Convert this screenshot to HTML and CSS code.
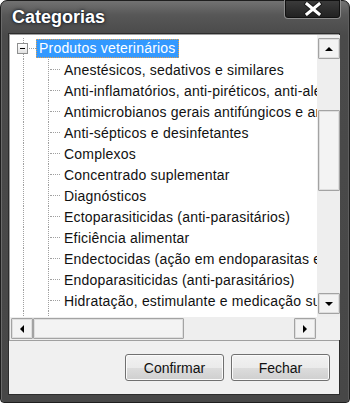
FILE: index.html
```html
<!DOCTYPE html>
<html lang="pt">
<head>
    <meta charset="UTF-8">
    <title>Categorias</title>
    <link rel="stylesheet" href="styles.css">
</head>
<body>
    <div class="window">
        <div class="titlebar">
            <span class="title">Categorias</span>
            <button class="close-btn">
                <svg width="18" height="14" viewBox="0 0 18 14">
                    <path d="M3 2 L15 12 M15 2 L3 12" stroke="#1a1a1a" stroke-width="5" stroke-linecap="square"/>
                    <path d="M3 2 L15 12 M15 2 L3 12" stroke="#fff" stroke-width="3" stroke-linecap="square"/>
                </svg>
            </button>
        </div>

        <div class="client">
            <div class="tree">
                <div class="tree-view">
                    <div class="row root">
                        <span class="exp-cell"><span class="expander"></span></span>
                        <span class="root-link"></span>
                        <span class="label selected">Produtos veterinários</span>
                    </div>
                    <div class="row"><span class="gap"></span><span class="vline"></span><span class="branch"></span><span class="label">Anestésicos, sedativos e similares</span></div>
                    <div class="row"><span class="gap"></span><span class="vline"></span><span class="branch"></span><span class="label">Anti-inflamatórios, anti-piréticos, anti-alérgicos</span></div>
                    <div class="row"><span class="gap"></span><span class="vline"></span><span class="branch"></span><span class="label">Antimicrobianos gerais antifúngicos e antivirais</span></div>
                    <div class="row"><span class="gap"></span><span class="vline"></span><span class="branch"></span><span class="label">Anti-sépticos e desinfetantes</span></div>
                    <div class="row"><span class="gap"></span><span class="vline"></span><span class="branch"></span><span class="label">Complexos</span></div>
                    <div class="row"><span class="gap"></span><span class="vline"></span><span class="branch"></span><span class="label">Concentrado suplementar</span></div>
                    <div class="row"><span class="gap"></span><span class="vline"></span><span class="branch"></span><span class="label">Diagnósticos</span></div>
                    <div class="row"><span class="gap"></span><span class="vline"></span><span class="branch"></span><span class="label">Ectoparasiticidas (anti-parasitários)</span></div>
                    <div class="row"><span class="gap"></span><span class="vline"></span><span class="branch"></span><span class="label">Eficiência alimentar</span></div>
                    <div class="row"><span class="gap"></span><span class="vline"></span><span class="branch"></span><span class="label">Endectocidas (ação em endoparasitas e ectoparasitas)</span></div>
                    <div class="row"><span class="gap"></span><span class="vline"></span><span class="branch"></span><span class="label">Endoparasiticidas (anti-parasitários)</span></div>
                    <div class="row"><span class="gap"></span><span class="vline"></span><span class="branch"></span><span class="label">Hidratação, estimulante e medicação suporte</span></div>
                    <!-- next item only peeks out under the scrollbar: lines only -->
                    <div class="row"><span class="gap"></span><span class="vline"></span><span class="vline"></span></div>
                </div>

                <div class="vscroll">
                    <div class="sb-btn"><span class="arrow up"></span></div>
                    <div class="sb-thumb vthumb"></div>
                    <div class="sb-btn push-end"><span class="arrow down"></span></div>
                </div>

                <div class="hscroll">
                    <div class="sb-btn hbtn"><span class="arrow left"></span></div>
                    <div class="sb-thumb hthumb"></div>
                    <div class="sb-btn hbtn push-end"><span class="arrow right"></span></div>
                </div>

                <div class="corner"></div>
            </div>

            <div class="footer">
                <button class="btn">Confirmar</button>
                <button class="btn">Fechar</button>
            </div>
        </div>
    </div>
</body>
</html>
```

FILE: styles.css
```css
body {
    margin: 0;
    background: #fff;
    font-family: "Liberation Sans", Arial, sans-serif;
}

.window {
    width: 350px;
    height: 403px;
    box-sizing: border-box;
    padding: 0 9px 7px 7px;
    display: flex;
    flex-direction: column;
    border: 1px solid #1e1e1e;
    border-radius: 7px 7px 4px 4px;
    background: linear-gradient(to bottom, #727272 0, #575757 14px, #4a4a4a 34px, #474747 100%);
    box-shadow: inset 1px 0 0 #6a6a6a, inset -1px 0 0 #5e5e5e;
}

.titlebar {
    height: 32px;
    display: flex;
    justify-content: space-between;
    align-items: flex-start;
}

.title {
    margin: 6px 0 0 4px;
    font-size: 18px;
    line-height: 20px;
    font-weight: bold;
    color: #fff;
    text-shadow: 0 0 2px #0d1a2e, 0 0 4px rgba(0, 0, 0, .7);
}

.close-btn {
    width: 57px;
    height: 19px;
    margin: -1px -1px 0 0;
    padding: 0;
    border: 1px solid #8c8c8c;
    border-top: 0;
    border-radius: 0 0 4px 4px;
    background: linear-gradient(to bottom, #3c3c3c, #202020);
    box-shadow: inset 0 0 0 1px #111;
    display: flex;
    justify-content: center;
    align-items: center;
}

.client {
    flex: 1;
    display: flex;
    flex-direction: column;
    border: 1px solid #2c2c2c;
    background: #f0f0f0;
}

/* tree control with its two scrollbars */
.tree {
    height: 307px;
    box-sizing: border-box;
    border: 1px solid #a0a0a0;
    display: grid;
    grid-template-columns: 307px 23px;
    grid-template-rows: 282px 23px;
}

.tree-view {
    background: #fff;
    overflow: hidden;
    padding-top: 3px;
    font-size: 14px;
    letter-spacing: .2px;
    color: #111;
}

.row {
    height: 21px;
    display: flex;
    align-items: center;
    white-space: nowrap;
}

.row > span {
    flex-shrink: 0;
}

.exp-cell {
    width: 11px;
    height: 21px;
    margin-left: 7px;
    display: flex;
    align-items: center;
    background: repeating-linear-gradient(to bottom, #a0a0a0 0 1px, transparent 1px 2px) no-repeat 6px 0 / 1px 100%;
}

.expander {
    width: 9px;
    height: 9px;
    border: 1px solid #8e8f8f;
    background: linear-gradient(to bottom, #fff, #e2e2e2);
    position: relative;
}

.expander::after {
    content: "";
    position: absolute;
    left: 2px;
    top: 4px;
    width: 5px;
    height: 1px;
    background: #000;
}

.root-link {
    width: 7px;
    margin-left: 1px;
    border-top: 1px dotted #a0a0a0;
}

.label.selected {
    height: 17px;
    line-height: 17px;
    padding: 0 2px;
    background: #3399ff;
    color: #fff;
    border: 1px dotted #e6a04a;
}

.gap {
    width: 13px;
}

.vline {
    width: 24px;
    height: 100%;
    border-left: 1px dotted #a0a0a0;
}

.branch {
    width: 15px;
    height: 100%;
    border-left: 1px dotted #a0a0a0;
    display: flex;
    align-items: center;
}

.branch::after {
    content: "";
    width: 10px;
    margin-left: 1px;
    border-top: 1px dotted #a0a0a0;
}

.vscroll,
.hscroll {
    background: #eeeeee;
    display: flex;
}

.vscroll {
    flex-direction: column;
    padding: 3px 0 3px 1px;
}

.hscroll {
    padding: 1px;
}

.sb-btn {
    width: 22px;
    height: 21px;
    box-sizing: border-box;
    border: 1px solid #a3a3a3;
    border-radius: 1px;
    box-shadow: inset 0 0 0 1px #dedede;
    background: #f3f3f3;
    display: flex;
    justify-content: center;
    align-items: center;
}

.push-end {
    margin-top: auto;
}

.hscroll .push-end {
    margin-top: 0;
    margin-left: auto;
}

.sb-thumb {
    box-sizing: border-box;
    border: 1px solid #a3a3a3;
    border-radius: 1px;
    box-shadow: inset 0 0 0 1px #dedede;
    background: #f3f3f3;
}

.vthumb {
    width: 22px;
    height: 81px;
    margin-top: 51px;
}

.hthumb {
    width: 151px;
    height: 21px;
}

.arrow {
    width: 0;
    height: 0;
}

.arrow.up {
    border-left: 4px solid transparent;
    border-right: 4px solid transparent;
    border-bottom: 4px solid #000;
}

.arrow.down {
    border-left: 4px solid transparent;
    border-right: 4px solid transparent;
    border-top: 4px solid #000;
}

.arrow.left {
    border-top: 4px solid transparent;
    border-bottom: 4px solid transparent;
    border-right: 4px solid #000;
}

.arrow.right {
    border-top: 4px solid transparent;
    border-bottom: 4px solid transparent;
    border-left: 4px solid #000;
}

.corner {
    background: #f0f0f0;
}

.footer {
    flex: 1;
    display: flex;
    justify-content: flex-end;
    align-items: center;
    gap: 7px;
    padding-right: 9px;
}

.btn {
    width: 99px;
    height: 27px;
    border: 1px solid #707070;
    border-radius: 3px;
    background: linear-gradient(to bottom, #f2f2f2 0%, #ebebeb 50%, #dddddd 50%, #cfcfcf 100%);
    box-shadow: inset 0 0 0 1px #fbfbfb;
    font-family: "Liberation Sans", Arial, sans-serif;
    font-size: 14px;
    color: #111;
    padding: 0;
}
```
